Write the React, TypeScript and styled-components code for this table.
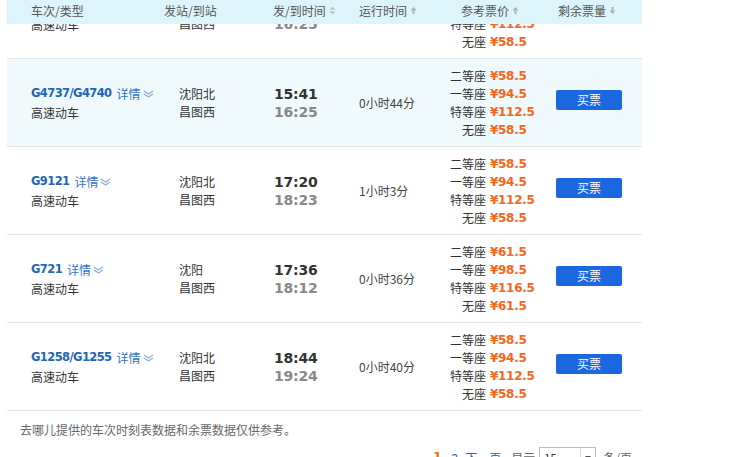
import { useLayoutEffect, useRef } from 'react';
import styled, { createGlobalStyle } from 'styled-components';

interface Price {
  seat: string;
  price: string;
}

interface Train {
  code: string;
  type: string;
  from: string;
  to: string;
  depart: string;
  arrive: string;
  duration: string;
  prices: Price[];
  active?: boolean;
}

const prices = (a: string, b: string, c: string, d: string): Price[] => [
  { seat: '二等座', price: a },
  { seat: '一等座', price: b },
  { seat: '特等座', price: c },
  { seat: '无座', price: d },
];

const trains: Train[] = [
  {
    code: 'G8063',
    type: '高速动车',
    from: '沈阳北',
    to: '昌图西',
    depart: '15:31',
    arrive: '16:25',
    duration: '0小时54分',
    prices: prices('¥58.5', '¥94.5', '¥112.5', '¥58.5'),
  },
  {
    code: 'G4737/G4740',
    type: '高速动车',
    from: '沈阳北',
    to: '昌图西',
    depart: '15:41',
    arrive: '16:25',
    duration: '0小时44分',
    prices: prices('¥58.5', '¥94.5', '¥112.5', '¥58.5'),
    active: true,
  },
  {
    code: 'G9121',
    type: '高速动车',
    from: '沈阳北',
    to: '昌图西',
    depart: '17:20',
    arrive: '18:23',
    duration: '1小时3分',
    prices: prices('¥58.5', '¥94.5', '¥112.5', '¥58.5'),
  },
  {
    code: 'G721',
    type: '高速动车',
    from: '沈阳',
    to: '昌图西',
    depart: '17:36',
    arrive: '18:12',
    duration: '0小时36分',
    prices: prices('¥61.5', '¥98.5', '¥116.5', '¥61.5'),
  },
  {
    code: 'G1258/G1255',
    type: '高速动车',
    from: '沈阳北',
    to: '昌图西',
    depart: '18:44',
    arrive: '19:24',
    duration: '0小时40分',
    prices: prices('¥58.5', '¥94.5', '¥112.5', '¥58.5'),
  },
];

type SortKind = 'both' | 'up' | 'down';

function SortIcon({ kind }: { kind: SortKind }) {
  return (
    <SortSvg width="7" height="9" viewBox="0 0 7 9">
      {kind === 'both' && (
        <>
          <path d="M3.5 0.5 L6.5 3.8 H0.5 Z" fill="#b9c3c7" />
          <path d="M3.5 8.5 L6.5 5.2 H0.5 Z" fill="#b9c3c7" />
        </>
      )}
      {kind === 'up' && (
        <>
          <path d="M3.5 1 L6.5 4.5 H0.5 Z" fill="#a8b2b6" />
          <rect x="2.5" y="4.5" width="2" height="3.5" fill="#a8b2b6" />
        </>
      )}
      {kind === 'down' && (
        <>
          <rect x="2.5" y="1" width="2" height="3.5" fill="#a8b2b6" />
          <path d="M3.5 8 L6.5 4.5 H0.5 Z" fill="#a8b2b6" />
        </>
      )}
    </SortSvg>
  );
}

function Chevron() {
  return (
    <ChevronSvg width="11" height="8" viewBox="0 0 11 8">
      <path d="M1 1 L5.5 4 L10 1" fill="none" stroke="#8db0dc" strokeWidth="1.4" />
      <path d="M1 4 L5.5 7 L10 4" fill="none" stroke="#8db0dc" strokeWidth="1.4" />
    </ChevronSvg>
  );
}

function App() {
  const scroller = useRef<HTMLDivElement>(null);

  useLayoutEffect(() => {
    if (scroller.current) scroller.current.scrollTop = 53;
  }, []);

  return (
    <>
      <GlobalStyle />
      <Page ref={scroller}>
        <Table>
          <Head>
            <HeadCell $pad={24}>车次/类型</HeadCell>
            <HeadCell $pad={4}>发站/到站</HeadCell>
            <HeadCell $pad={5}>
              发/到时间 <SortIcon kind="both" />
            </HeadCell>
            <HeadCell $pad={7}>
              运行时间 <SortIcon kind="up" />
            </HeadCell>
            <HeadCell $pad={21}>
              参考票价 <SortIcon kind="up" />
            </HeadCell>
            <HeadCell $pad={13}>
              剩余票量 <SortIcon kind="down" />
            </HeadCell>
          </Head>

          {trains.map(t => (
            <Row key={t.code} $active={t.active}>
              <Cell $pad={24}>
                <TrainCode>
                  {t.code} <Detail>详情</Detail>
                  <Chevron />
                </TrainCode>
                <TrainType>{t.type}</TrainType>
              </Cell>
              <Cell $pad={19}>
                <Station>{t.from}</Station>
                <Station>{t.to}</Station>
              </Cell>
              <Cell $pad={6}>
                <Time>{t.depart}</Time>
                <Time $muted>{t.arrive}</Time>
              </Cell>
              <Cell $pad={7}>
                <Duration>{t.duration}</Duration>
              </Cell>
              <Cell $pad={0}>
                <PriceList>
                  {t.prices.map(p => (
                    <PriceLine key={p.seat}>
                      <Seat>{p.seat}</Seat>
                      <Amount>{p.price}</Amount>
                    </PriceLine>
                  ))}
                </PriceList>
              </Cell>
              <Cell $pad={11}>
                <BuyButton>买票</BuyButton>
              </Cell>
            </Row>
          ))}
        </Table>

        <Note>去哪儿提供的车次时刻表数据和余票数据仅供参考。</Note>

        <Pager>
          <PageCurrent>1</PageCurrent>
          <PageLink $gap={10}>2</PageLink>
          <PageLink $gap={7}>下一页</PageLink>
          <PagerText $gap={10}>显示</PagerText>
          <SizeSelect>
            <span>15</span>
            <SelectArrow />
          </SizeSelect>
          <PagerText $gap={7}>条/页</PagerText>
        </Pager>
      </Page>
    </>
  );
}

export default App;

const GlobalStyle = createGlobalStyle`
  html, body {
    margin: 0;
    padding: 0;
    background: #fff;
  }

  body {
    font-family: "Noto Sans CJK SC", "DejaVu Sans", sans-serif;
    font-size: 12px;
    color: #333;
  }
`;

const Page = styled.div`
  height: 100vh;
  overflow: hidden;
  padding: 0 0 60px 7px;
  box-sizing: border-box;
`;

const Table = styled.div`
  width: 635px;
`;

const columns = '153px 108px 84px 88px 105px 97px';

const Head = styled.div`
  position: sticky;
  top: 0;
  z-index: 2;

  display: grid;
  grid-template-columns: ${columns};
  align-items: center;

  height: 24px;
  padding-bottom: 3px;
  box-sizing: border-box;
  background: #dcf5fa;
`;

const HeadCell = styled.div<{ $pad: number }>`
  display: flex;
  align-items: center;
  gap: 1px;

  padding-left: ${p => p.$pad}px;
  color: #555;
  font-size: 12px;
  white-space: nowrap;
`;

const SortSvg = styled.svg`
  display: block;
  margin-left: 2px;
`;

const Row = styled.div<{ $active?: boolean }>`
  display: grid;
  grid-template-columns: ${columns};
  align-items: center;

  height: 88px;
  border-bottom: 1px solid #e3e6e7;
  box-sizing: border-box;
  background: ${p => (p.$active ? '#f0fafd' : '#fff')};
`;

const Cell = styled.div<{ $pad: number }>`
  display: flex;
  flex-direction: column;
  justify-content: center;

  padding-left: ${p => p.$pad}px;
  white-space: nowrap;
`;

const TrainCode = styled.div`
  display: flex;
  align-items: center;

  height: 19px;
  color: #2366b5;
  font-family: "DejaVu Sans", sans-serif;
  font-weight: bold;
  font-size: 11.5px;
  letter-spacing: -0.6px;
`;

const Detail = styled.span`
  margin-left: 5px;
  color: #2f72c4;
  font-family: "Noto Sans CJK SC", sans-serif;
  font-weight: normal;
  font-size: 12px;
  letter-spacing: 0;
`;

const ChevronSvg = styled.svg`
  display: block;
  margin-left: 2px;
  margin-top: 2px;
`;

const TrainType = styled.div`
  height: 19px;
  line-height: 19px;
  color: #333;
  font-size: 12px;
`;

const Station = styled.div`
  height: 18px;
  line-height: 18px;
  color: #333;
  font-size: 12px;
`;

const Time = styled.div<{ $muted?: boolean }>`
  height: 18px;
  line-height: 18px;
  color: ${p => (p.$muted ? '#888' : '#333')};
  font-family: "DejaVu Sans", sans-serif;
  font-weight: bold;
  font-size: 14px;
  letter-spacing: -0.2px;
`;

const Duration = styled.div`
  color: #444;
  font-size: 12px;
`;

const PriceList = styled.div`
  display: flex;
  flex-direction: column;
`;

const PriceLine = styled.div`
  display: grid;
  grid-template-columns: 46px auto;
  column-gap: 4px;
  align-items: center;

  height: 18px;
`;

const Seat = styled.span`
  text-align: right;
  color: #333;
  font-size: 12px;
`;

const Amount = styled.span`
  color: #f6661c;
  font-family: "DejaVu Sans", sans-serif;
  font-weight: bold;
  font-size: 12px;
  letter-spacing: -0.3px;
`;

const BuyButton = styled.button`
  width: 66px;
  height: 20px;
  padding: 0;
  margin-bottom: 6px;

  border: 0;
  border-radius: 2px;
  background: #1a67e0;
  color: #fff;
  font-family: "Noto Sans CJK SC", sans-serif;
  font-size: 12px;
  cursor: pointer;
`;

const Note = styled.p`
  margin: 0;
  padding: 11px 0 0 13px;
  color: #666;
  font-size: 12px;
  line-height: 16px;
`;

const Pager = styled.div`
  display: flex;
  align-items: center;
  justify-content: flex-end;

  width: 625px;
  margin-top: 9px;
  font-size: 12px;
`;

const PageCurrent = styled.span`
  color: #f60;
  font-weight: bold;
  font-family: "DejaVu Sans", sans-serif;
`;

const PageLink = styled.span<{ $gap: number }>`
  margin-left: ${p => p.$gap}px;
  color: #2366b5;
`;

const PagerText = styled.span<{ $gap: number }>`
  margin-left: ${p => p.$gap}px;
  color: #666;
`;

const SizeSelect = styled.div`
  display: flex;
  align-items: center;
  justify-content: space-between;

  width: 57px;
  height: 20px;
  margin-left: 4px;
  padding-left: 4px;
  box-sizing: border-box;

  border: 1px solid #bbb;
  color: #333;
  font-size: 11px;
`;

const SelectArrow = styled.span`
  width: 14px;
  height: 100%;
  border-left: 1px solid #ddd;
  position: relative;

  &::after {
    content: '';
    position: absolute;
    left: 4px;
    top: 8px;
    border: 3px solid transparent;
    border-top: 4px solid #555;
  }
`;
